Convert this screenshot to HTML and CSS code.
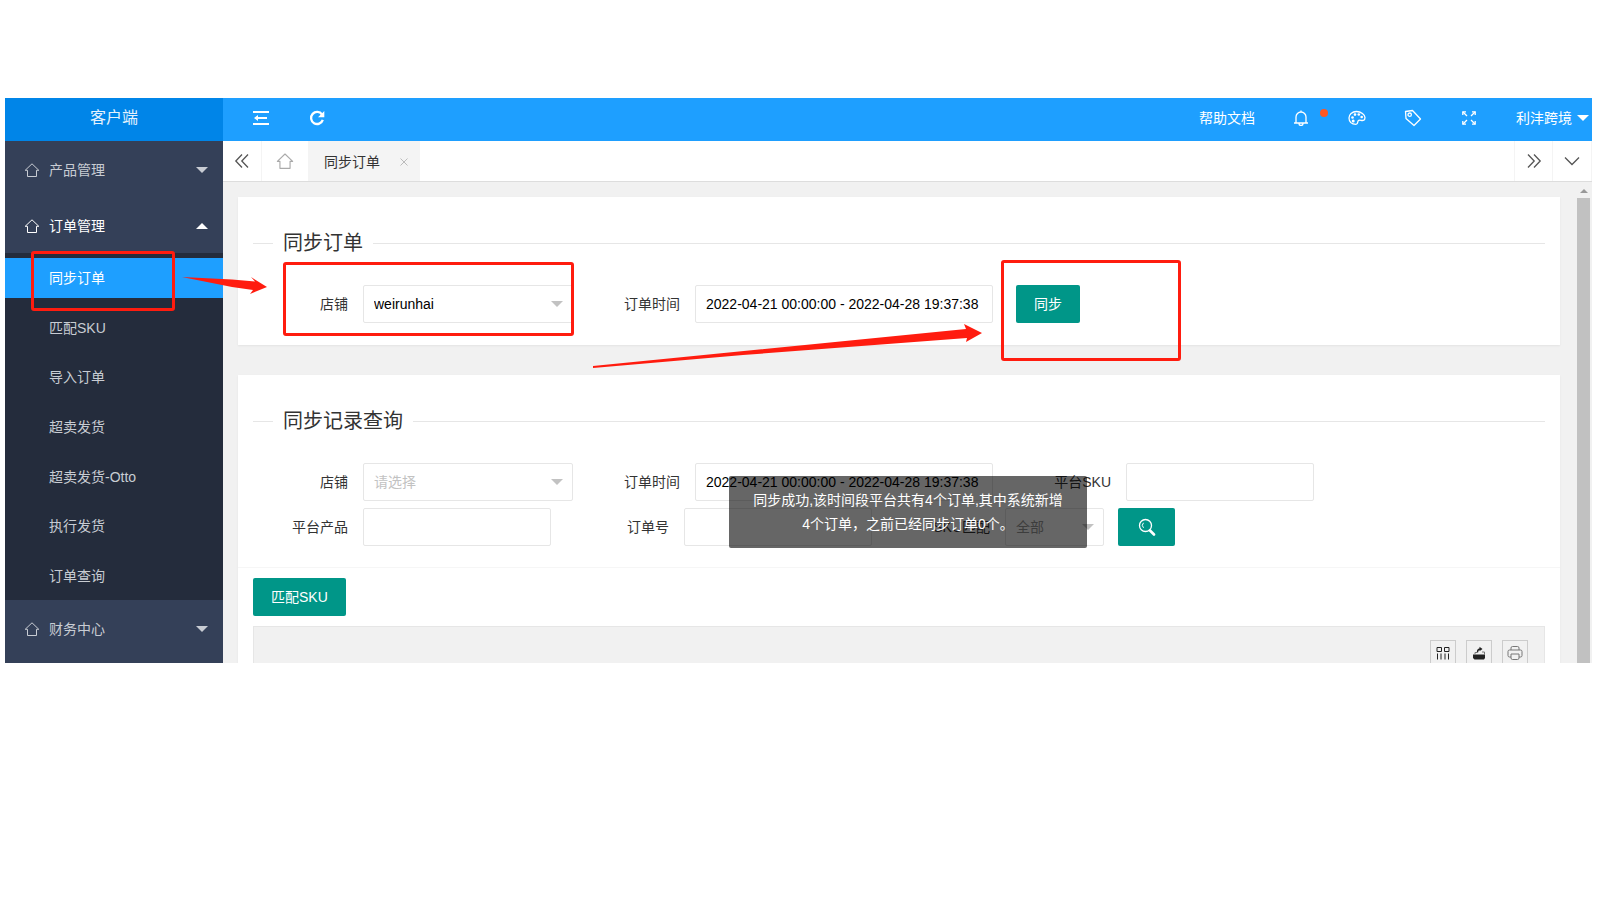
FILE: index.html
```html
<!DOCTYPE html>
<html lang="zh-CN">
<head>
<meta charset="utf-8">
<title>同步订单 - 客户端</title>
<link rel="stylesheet" href="styles.css">
</head>
<body>
<svg class="sprite" aria-hidden="true">
  <symbol id="home" viewBox="0 0 16 16"><path d="M3.500 8.300H1.200L8 1.800l6.800 6.500H12.500V14.500H3.500Z" fill="none" stroke="currentColor" stroke-linejoin="round"/></symbol>
</svg>
<div class="app">
  <aside class="sidebar">
    <div class="logo">客户端</div>
    <nav class="menu">
      <a class="menu-item" href="#"><svg class="menu-icon"><use href="#home"/></svg>产品管理<span class="caret caret-down"></span></a>
      <a class="menu-item open" href="#"><svg class="menu-icon"><use href="#home"/></svg>订单管理<span class="caret caret-up"></span></a>
      <div class="submenu">
        <a class="sub-item active" href="#">同步订单</a>
        <a class="sub-item" href="#">匹配SKU</a>
        <a class="sub-item" href="#">导入订单</a>
        <a class="sub-item" href="#">超卖发货</a>
        <a class="sub-item" href="#">超卖发货-Otto</a>
        <a class="sub-item" href="#">执行发货</a>
        <a class="sub-item" href="#">订单查询</a>
      </div>
      <a class="menu-item" href="#"><svg class="menu-icon"><use href="#home"/></svg>财务中心<span class="caret caret-down"></span></a>
    </nav>
  </aside>

  <div class="main">
    <header class="header">
      <div class="header-left">
        <button class="icon-btn" aria-label="收起菜单"><svg width="16" height="14" viewBox="0 0 16 14" fill="none" stroke="currentColor" stroke-width="2"><path d="M0 1h16M7 7h7M0 13h16"/><path d="M1 7l4-3v2h2v2H5v2z" fill="currentColor" stroke="none"/></svg></button>
        <button class="icon-btn" aria-label="刷新"><svg width="16" height="16" viewBox="0 0 16 16"><path d="M13 4.500A6 6 0 1 0 13.800 9.800" fill="none" stroke="currentColor" stroke-width="2.300"/><path d="M15.300 1v6.300H9z" fill="currentColor"/></svg></button>
      </div>
      <div class="header-right">
        <a class="help" href="#">帮助文档</a>
        <button class="icon-btn bell" aria-label="消息"><svg width="16" height="16" viewBox="0 0 16 16" fill="none" stroke="currentColor" stroke-width="1.300"><path d="M1 13h14M3 13V7a5 5 0 0 1 10 0v6M8 2V.5M6 13.500a2 2 0 0 0 4 0"/></svg><span class="dot"></span></button>
        <button class="icon-btn" aria-label="主题"><svg width="18" height="16" viewBox="0 0 18 16" fill="none" stroke="currentColor" stroke-width="1.300"><path d="M8 14.300C3.500 14.300 1 11.500 1 8s3-6.500 7.500-6.500S17 5 17 7.500c0 3-2 3.300-4 2.800-2-.5-3 .3-3.200 1.500C9.600 13 9.500 14.300 8 14.300Z"/><g fill="currentColor" stroke="none"><circle cx="4.500" cy="7.500" r="1.300"/><circle cx="7" cy="4.600" r="1.300"/><circle cx="10.800" cy="4.500" r="1.300"/><circle cx="13.700" cy="7" r="1.300"/><circle cx="5.200" cy="11" r="1.500"/></g></svg></button>
        <button class="icon-btn" aria-label="便签"><svg width="18" height="18" viewBox="0 0 18 18" fill="none" stroke="currentColor" stroke-width="1.300" stroke-linejoin="round"><path d="M1.500 2.500 8.500 1.500 16.500 10 10 16.500 2 9.500Z"/><circle cx="5.700" cy="5.700" r="1.700"/></svg></button>
        <button class="icon-btn" aria-label="全屏"><svg width="14" height="14" viewBox="0 0 14 14" fill="none" stroke="currentColor" stroke-width="1.300"><path d="M1 1l4 4M13 1 9 5M1 13l4-4M13 13 9 9"/><path d="M.8 4V.8H4M10 .8h3.200V4M.8 10v3.200H4M13.200 10v3.200H10"/></svg></button>
        <button class="user">利沣跨境<span class="caret caret-down"></span></button>
      </div>
    </header>

    <div class="tabs">
      <button class="tab-nav" aria-label="向左"><svg width="16" height="16" viewBox="0 0 16 16"><path d="M8 1.500 1.800 8 8 14.500M14 1.500 7.800 8l6.200 6.500"/></svg></button>
      <button class="tab-home" aria-label="首页"><svg width="18" height="18"><use href="#home"/></svg></button>
      <div class="tab">同步订单<button class="tab-close" aria-label="关闭"><svg width="8" height="8" viewBox="0 0 8 8"><path d="M.5.5l7 7M7.500.5l-7 7"/></svg></button></div>
      <button class="tab-nav push" aria-label="向右"><svg width="16" height="16" viewBox="0 0 16 16"><path d="M2 1.500 8.200 8 2 14.500M8 1.500 14.200 8 8 14.500"/></svg></button>
      <button class="tab-nav" aria-label="更多"><svg width="16" height="16" viewBox="0 0 16 16"><path d="M1 4.500 8 11.500l7-7"/></svg></button>
    </div>

    <div class="view">
      <div class="content">
        <section class="card">
          <h2 class="title">同步订单</h2>
          <form class="row">
            <div class="field"><label for="shop">店铺</label><span class="select shop"><select id="shop"><option>weirunhai</option></select></span></div>
            <div class="field near"><label for="time">订单时间</label><input class="date" id="time" value="2022-04-21 00:00:00 - 2022-04-28 19:37:38"></div>
            <button class="btn" type="button">同步</button>
          </form>
        </section>

        <section class="card">
          <h2 class="title">同步记录查询</h2>
          <form class="search">
            <div class="row">
              <div class="field"><label for="qshop">店铺</label><span class="select shop empty"><select id="qshop"><option>请选择</option></select></span></div>
              <div class="field near"><label for="qtime">订单时间</label><input class="date" id="qtime" value="2022-04-21 00:00:00 - 2022-04-28 19:37:38"></div>
              <div class="field"><label for="qsku">平台SKU</label><input id="qsku"></div>
            </div>
            <div class="row">
              <div class="field"><label for="qprod">平台产品</label><input id="qprod"></div>
              <div class="field"><label for="qno">订单号</label><input id="qno"></div>
              <div class="field"><label for="qmatch">SKU匹配</label><span class="select match empty"><select id="qmatch"><option>全部</option></select></span>
                <button class="btn find" type="button" aria-label="查询"><svg width="18" height="18" viewBox="0 0 18 18" fill="none" stroke="currentColor"><circle cx="7.500" cy="7.500" r="6" stroke-width="1.300"/><path d="M12 12.500l4 4" stroke-width="2.600" stroke-linecap="round"/><path d="M5.500 4.800a3.500 3.500 0 0 0 0 5"/></svg></button>
              </div>
            </div>
          </form>
          <div class="table-area">
            <button class="btn" type="button">匹配SKU</button>
            <div class="toolbar">
              <button class="tool" aria-label="筛选列"><svg width="14" height="14" viewBox="0 0 14 14" fill="none" stroke="currentColor"><path d="M1 1.500h4.500v4H1zM8.500 1.500H13v4H8.500zM1.500 7.500v6M5 7.500v6M9 7.500v6M12.500 7.500v6"/></svg></button>
              <button class="tool" aria-label="导出"><svg width="14" height="14" viewBox="0 0 14 14"><path d="M1 8.500h12V12l-1 1.500H2.500L1 12z" fill="currentColor"/><path d="M3 8.500V6.500h2M10 6h2.500v3" fill="none" stroke="#777"/><path d="M5.500 6.500c0-2.500 1-3.500 3-3.500" fill="none" stroke="currentColor" stroke-width="1.400"/><path d="M7.500.8 10.500 3 7.500 5.200z" fill="currentColor"/></svg></button>
              <button class="tool" aria-label="打印"><svg width="16" height="16" viewBox="0 0 16 16" fill="none" stroke="#777"><path d="M4 5V3a1.500 1.500 0 0 1 1.500-1.500h5A1.500 1.500 0 0 1 12 3v2M4 12H2.500A1.500 1.500 0 0 1 1 10.500v-4A1.500 1.500 0 0 1 2.500 5h11A1.500 1.500 0 0 1 15 6.500v4a1.500 1.500 0 0 1-1.500 1.500H12M4 9h8v4a1.500 1.500 0 0 1-1.500 1.500h-5A1.500 1.500 0 0 1 4 13z"/></svg></button>
            </div>
          </div>
        </section>
      </div>
      <div class="scrollbar"><span class="scroll-up"></span><span class="thumb"></span></div>
    </div>
  </div>

  <div class="toast" role="status">同步成功,该时间段平台共有4个订单,其中系统新增4个订单，之前已经同步订单0个。</div>
  <div class="mark mark-menu"></div>
  <div class="mark mark-shop"></div>
  <div class="mark mark-sync"></div>
  <svg class="arrow arrow-menu" width="86" height="20" viewBox="0 0 86 20"><path d="M0 1 50 3.500 73 5.500 69 1 85 11 68 18 71 14 50 11Z"/></svg>
  <svg class="arrow arrow-sync" width="390" height="46" viewBox="0 0 390 46"><path d="M0 42 373 5 371 0 389 9 373 18 374 14 150 31 0 44Z"/></svg>
</div>
</body>
</html>
```
FILE: styles.css
```css
* { box-sizing: border-box; }
body {
  margin: 0;
  padding: 98px 8px 0 5px;
  background: #fff;
  color: #333;
  font: 14px/20px "Liberation Sans", "Noto Sans CJK SC", sans-serif;
}
button, input, select { font: inherit; color: inherit; margin: 0; }
button { padding: 0; border: 0; background: none; cursor: pointer; }
a { color: inherit; text-decoration: none; }
.sprite { position: absolute; width: 0; height: 0; }

.app {
  position: relative;
  display: flex;
  height: calc(100vh - 335px);
  overflow: hidden;
}

.caret { border: 6px solid transparent; }
.caret-down { border-top-color: currentColor; border-bottom: 0; }
.caret-up { border-bottom-color: currentColor; border-top: 0; }

/* sidebar */
.sidebar { flex: 0 0 218px; background: #344058; color: #c8ccd3; }
.logo { padding-bottom: 4px; background: #0085e8; color: #e4f2fd; font-size: 16px; line-height: 39px; text-align: center; }
.menu-item { display: flex; align-items: center; height: 56px; padding: 1px 15px 0 19px; }
.menu-item.open { color: #fff; }
.menu-icon { width: 16px; height: 16px; margin-right: 9px; }
.menu-item .caret { margin-left: auto; }
.submenu {
  display: flex;
  flex-direction: column;
  justify-content: space-between;
  min-height: 347px;
  padding: 5px 0 4px;
  background: #242c3c;
}
.sub-item { padding-left: 44px; line-height: 40px; }
.sub-item.active { background: #1e9fff; color: #fff; }

/* top bar */
.main { flex: 1; display: flex; flex-direction: column; min-width: 0; }
.header {
  display: flex;
  justify-content: space-between;
  flex: 0 0 43px;
  padding-bottom: 3px;
  background: #1e9fff;
  color: #fff;
}
.header-left { display: flex; padding-left: 10px; }
.header-right { display: flex; align-items: center; }
.icon-btn { display: flex; align-items: center; justify-content: center; width: 56px; height: 40px; }
.help { margin-right: 18px; }
.bell { position: relative; }
.dot { position: absolute; top: 11px; right: 1px; width: 8px; height: 8px; border-radius: 4px; background: #ff5722; }
.user { display: flex; align-items: center; gap: 5px; margin-left: 19px; padding-right: 3px; }

/* tabs */
.tabs { display: flex; flex: 0 0 41px; border-bottom: 1px solid #ddd; background: #fff; }
.tabs path { fill: none; stroke: currentColor; }
.tab-nav { display: flex; align-items: center; justify-content: center; width: 39px; border-right: 1px solid #f4f4f4; color: #555; }
.tab-nav path { stroke-width: 1.3; }
.tab-nav.push { margin-left: auto; border-left: 1px solid #f4f4f4; }
.tab-home { display: flex; align-items: center; justify-content: center; width: 46px; color: #aaa; }
.tab { display: flex; align-items: center; gap: 20px; padding: 2px 12px 0 16px; background: #f4f4f4; }
.tab-close { display: flex; color: #bbb; }

/* page body */
.view { display: flex; flex: 1; min-height: 0; background: #f1f1f1; }
.content { flex: 1; min-width: 0; padding: 15px 17px 0 15px; }
.card { margin-bottom: 30px; padding: 33px 15px 22px; background: #fff; box-shadow: 0 1px 2px rgba(0, 0, 0, .06); }
.title {
  display: flex;
  align-items: center;
  gap: 10px;
  margin: 0 0 29px;
  font-size: 20px;
  font-weight: 400;
  line-height: 26px;
}
.title::before, .title::after { content: ""; width: 20px; height: 1px; background: #e6e6e6; }
.title::after { flex: 1; }
.row { display: flex; gap: 23px; }
.field { display: flex; }
.field label { width: 110px; padding-right: 15px; line-height: 38px; text-align: right; }
.field.near label { width: 99px; }
input, select { height: 38px; border: 1px solid #e6e6e6; border-radius: 2px; background: #fff; padding: 0 10px; color: #000; }
input { width: 188px; }
input.date { width: 298px; }
.select { position: relative; }
.select select { width: 100%; appearance: none; opacity: 1; }
.select::after { content: ""; position: absolute; top: 16px; right: 10px; border: 6px solid transparent; border-top-color: #c2c2c2; border-bottom: 0; }
.select.shop { width: 210px; }
.select.match { width: 99px; }
.select.empty select { color: #c2c2c2; }
.select.match select { color: #999; }
.btn { height: 38px; padding: 0 18px; border-radius: 2px; background: #009688; color: #fff; }
.btn.find { display: flex; align-items: center; justify-content: center; width: 57px; margin-left: 14px; padding: 0; }
.search { display: grid; gap: 7px; margin: 0 -15px; padding: 0 15px 21px; border-bottom: 1px solid #f6f6f6; }
.table-area { padding-top: 10px; }
.toolbar { display: flex; justify-content: flex-end; gap: 10px; margin-top: 10px; padding: 13px 16px; border: 1px solid #e6e6e6; background: #f1f1f1; }
.tool { display: flex; align-items: center; justify-content: center; width: 26px; height: 26px; border: 1px solid #ccc; color: #222; }

.scrollbar { display: flex; flex-direction: column; align-items: center; width: 15px; padding: 7px 2px 0 0; }
.scroll-up { border: 4px solid transparent; border-top: 0; border-bottom-color: #999; }
.thumb { flex: 1; width: 13px; margin-top: 5px; background: #c1c1c1; }

/* floating message and annotations */
.toast {
  position: absolute;
  top: 378px;
  left: 724px;
  width: 358px;
  padding: 12px 24px;
  border-radius: 2px;
  background: rgba(0, 0, 0, .6);
  color: #fff;
  line-height: 24px;
  text-align: center;
}
.mark { position: absolute; border: 3px solid #ff1c0f; border-radius: 3px; }
.mark-menu { top: 153px; left: 26px; width: 144px; height: 60px; }
.mark-shop { top: 164px; left: 278px; width: 291px; height: 74px; }
.mark-sync { top: 162px; left: 996px; width: 180px; height: 101px; }
.arrow { position: absolute; fill: #ff1c0f; }
.arrow-menu { top: 178px; left: 177px; }
.arrow-sync { top: 226px; left: 588px; }
```
